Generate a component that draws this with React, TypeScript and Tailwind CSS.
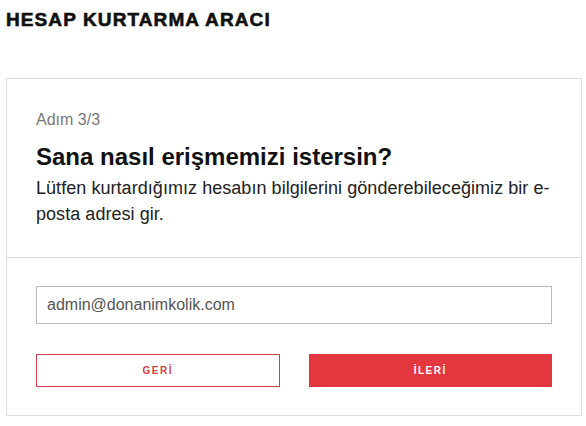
export default function App() {
  return (
    <div className="min-h-screen bg-white px-[6px] pt-[11px] font-['Liberation_Sans',Arial,sans-serif]">
      <h1 className="text-[19px] leading-[18px] font-bold tracking-[1.1px] text-[#111] [-webkit-text-stroke:0.6px_#111]">
        HESAP KURTARMA ARACI
      </h1>

      <div className="mt-[49px] w-[576px] border border-[#dddddd]">
        {/* Başlık bölümü */}
        <div className="px-[29px] pt-[29px] pb-[30px]">
          <p className="text-[16px] leading-[24px] text-[#777]">Adım 3/3</p>
          <h2 className="mt-[10px] text-[24px] leading-[30px] font-bold text-[#111]">
            Sana nasıl erişmemizi istersin?
          </h2>
          <p className="mt-[3px] text-[18px] leading-[26px] tracking-[0.05px] text-[#222]">
            Lütfen kurtardığımız hesabın bilgilerini gönderebileceğimiz bir e-posta adresi gir.
          </p>
        </div>

        {/* Form bölümü */}
        <div className="border-t border-[#dddddd] px-[29px] pt-[28px] pb-[28px]">
          <input
            type="text"
            defaultValue="admin@donanimkolik.com"
            className="block h-[38px] w-full border border-[#bbbbbb] px-[10px] text-[16px] text-[#555] outline-none"
          />
          <div className="mt-[30px] grid grid-cols-2 gap-[29px]">
            <button className="h-[33px] border border-[#d0404b] bg-white text-[10px] font-bold tracking-[1.5px] text-[#d0404b]">
              GERİ
            </button>
            <button className="h-[33px] bg-[#e3363f] text-[10px] font-bold tracking-[1.5px] text-white">
              İLERİ
            </button>
          </div>
        </div>
      </div>
    </div>
  );
}
